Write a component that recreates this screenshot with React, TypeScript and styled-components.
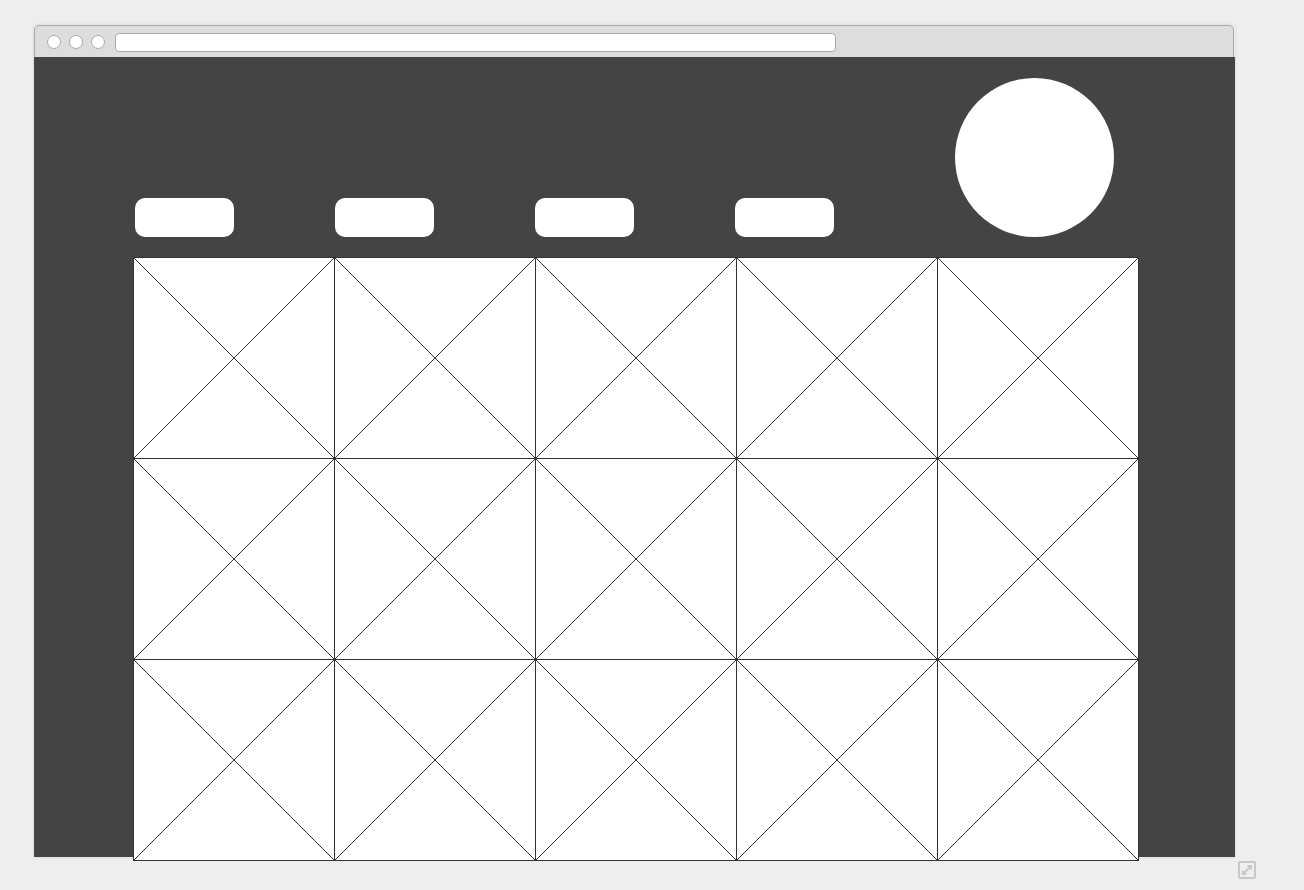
import React, { FC } from "react";
import styled, { createGlobalStyle } from "styled-components";

const GlobalStyle = createGlobalStyle`
  html, body {
    margin: 0;
    padding: 0;
    background-color: #eeeeee;
    font-family: "Liberation Sans", Arial, sans-serif;
  }
`;

const COLUMNS = 5;
const ROWS = 3;

const App: FC = () => {
  const cells = Array.from({ length: COLUMNS * ROWS }, (_, i) => i);

  return (
    <>
      <GlobalStyle />
      <Stage>
        <Window>
          <TitleBar>
            <Dots>
              <Dot />
              <Dot />
              <Dot />
            </Dots>
            <UrlBar />
          </TitleBar>
          <Content>
            <Header>
              {[0, 1, 2, 3].map((i) => (
                <NavSlot key={i}>
                  <NavButton />
                </NavSlot>
              ))}
              <Avatar />
            </Header>
            <Grid>
              {cells.map((i) => (
                <Cell key={i}>
                  <Placeholder viewBox="0 0 200 200">
                    <line x1="0" y1="0" x2="200" y2="200" />
                    <line x1="200" y1="0" x2="0" y2="200" />
                  </Placeholder>
                </Cell>
              ))}
            </Grid>
          </Content>
        </Window>
        <Footer>
          <ResizeIcon viewBox="0 0 18 18">
            <rect x="1" y="1" width="16" height="16" rx="1" />
            <path d="M5 13 L13 5" />
            <path d="M9.5 5 H13 V8.5" />
            <path d="M5 9.5 V13 H8.5" />
          </ResizeIcon>
        </Footer>
      </Stage>
    </>
  );
};

export default App;

const Stage = styled.div`
  display: flex;
  flex-direction: column;
  width: 1222px;
  padding: 25px 0 0 34px;
`;

const Window = styled.div`
  width: 1201px;
  box-shadow: 0 0 3px rgba(0, 0, 0, 0.12);
`;

const TitleBar = styled.div`
  display: flex;
  align-items: center;
  box-sizing: border-box;
  width: 1200px;
  height: 32px;
  padding: 1px 12px 0 12px;
  background-color: #dddddd;
  border: 1px solid #aaaaaa;
  border-bottom: none;
  border-radius: 5px 5px 0 0;
`;

const Dots = styled.div`
  display: flex;
  gap: 8px;
`;

const Dot = styled.span`
  display: block;
  box-sizing: border-box;
  width: 14px;
  height: 14px;
  border-radius: 50%;
  background-color: #fff;
  border: 1px solid #aaaaaa;
`;

const UrlBar = styled.div`
  box-sizing: border-box;
  width: 721px;
  height: 19px;
  margin-left: 10px;
  background-color: #fff;
  border: 1px solid #aaaaaa;
  border-radius: 4px;
`;

const Content = styled.div`
  box-sizing: border-box;
  height: 800px;
  padding: 21px 0 0 99px;
  background-color: #444444;
`;

const Header = styled.div`
  display: flex;
  align-items: flex-end;
  height: 159px;
`;

const NavSlot = styled.div`
  width: 200px;
  padding-left: 2px;
  box-sizing: border-box;
`;

const NavButton = styled.div`
  width: 99px;
  height: 39px;
  border-radius: 10px;
  background-color: #fff;
`;

const Avatar = styled.div`
  width: 159px;
  height: 159px;
  margin-left: 22px;
  border-radius: 50%;
  background-color: #fff;
`;

const Grid = styled.div`
  display: grid;
  grid-template-columns: repeat(${COLUMNS}, 201px);
  grid-template-rows: repeat(${ROWS}, 201px);
  width: 1006px;
  margin-top: 20px;
  background-color: #fff;
  border-right: 1px solid #333;
  border-bottom: 1px solid #333;
  box-sizing: border-box;
`;

const Cell = styled.div`
  display: flex;
  border-left: 1px solid #333;
  border-top: 1px solid #333;
`;

const Placeholder = styled.svg`
  display: block;
  width: 200px;
  height: 200px;
  line {
    stroke: #333;
    stroke-width: 1;
  }
`;

const Footer = styled.div`
  display: flex;
  justify-content: flex-end;
  margin-top: 4px;
`;

const ResizeIcon = styled.svg`
  width: 18px;
  height: 18px;
  fill: none;
  stroke: #c8c8c8;
  stroke-width: 2;
`;
